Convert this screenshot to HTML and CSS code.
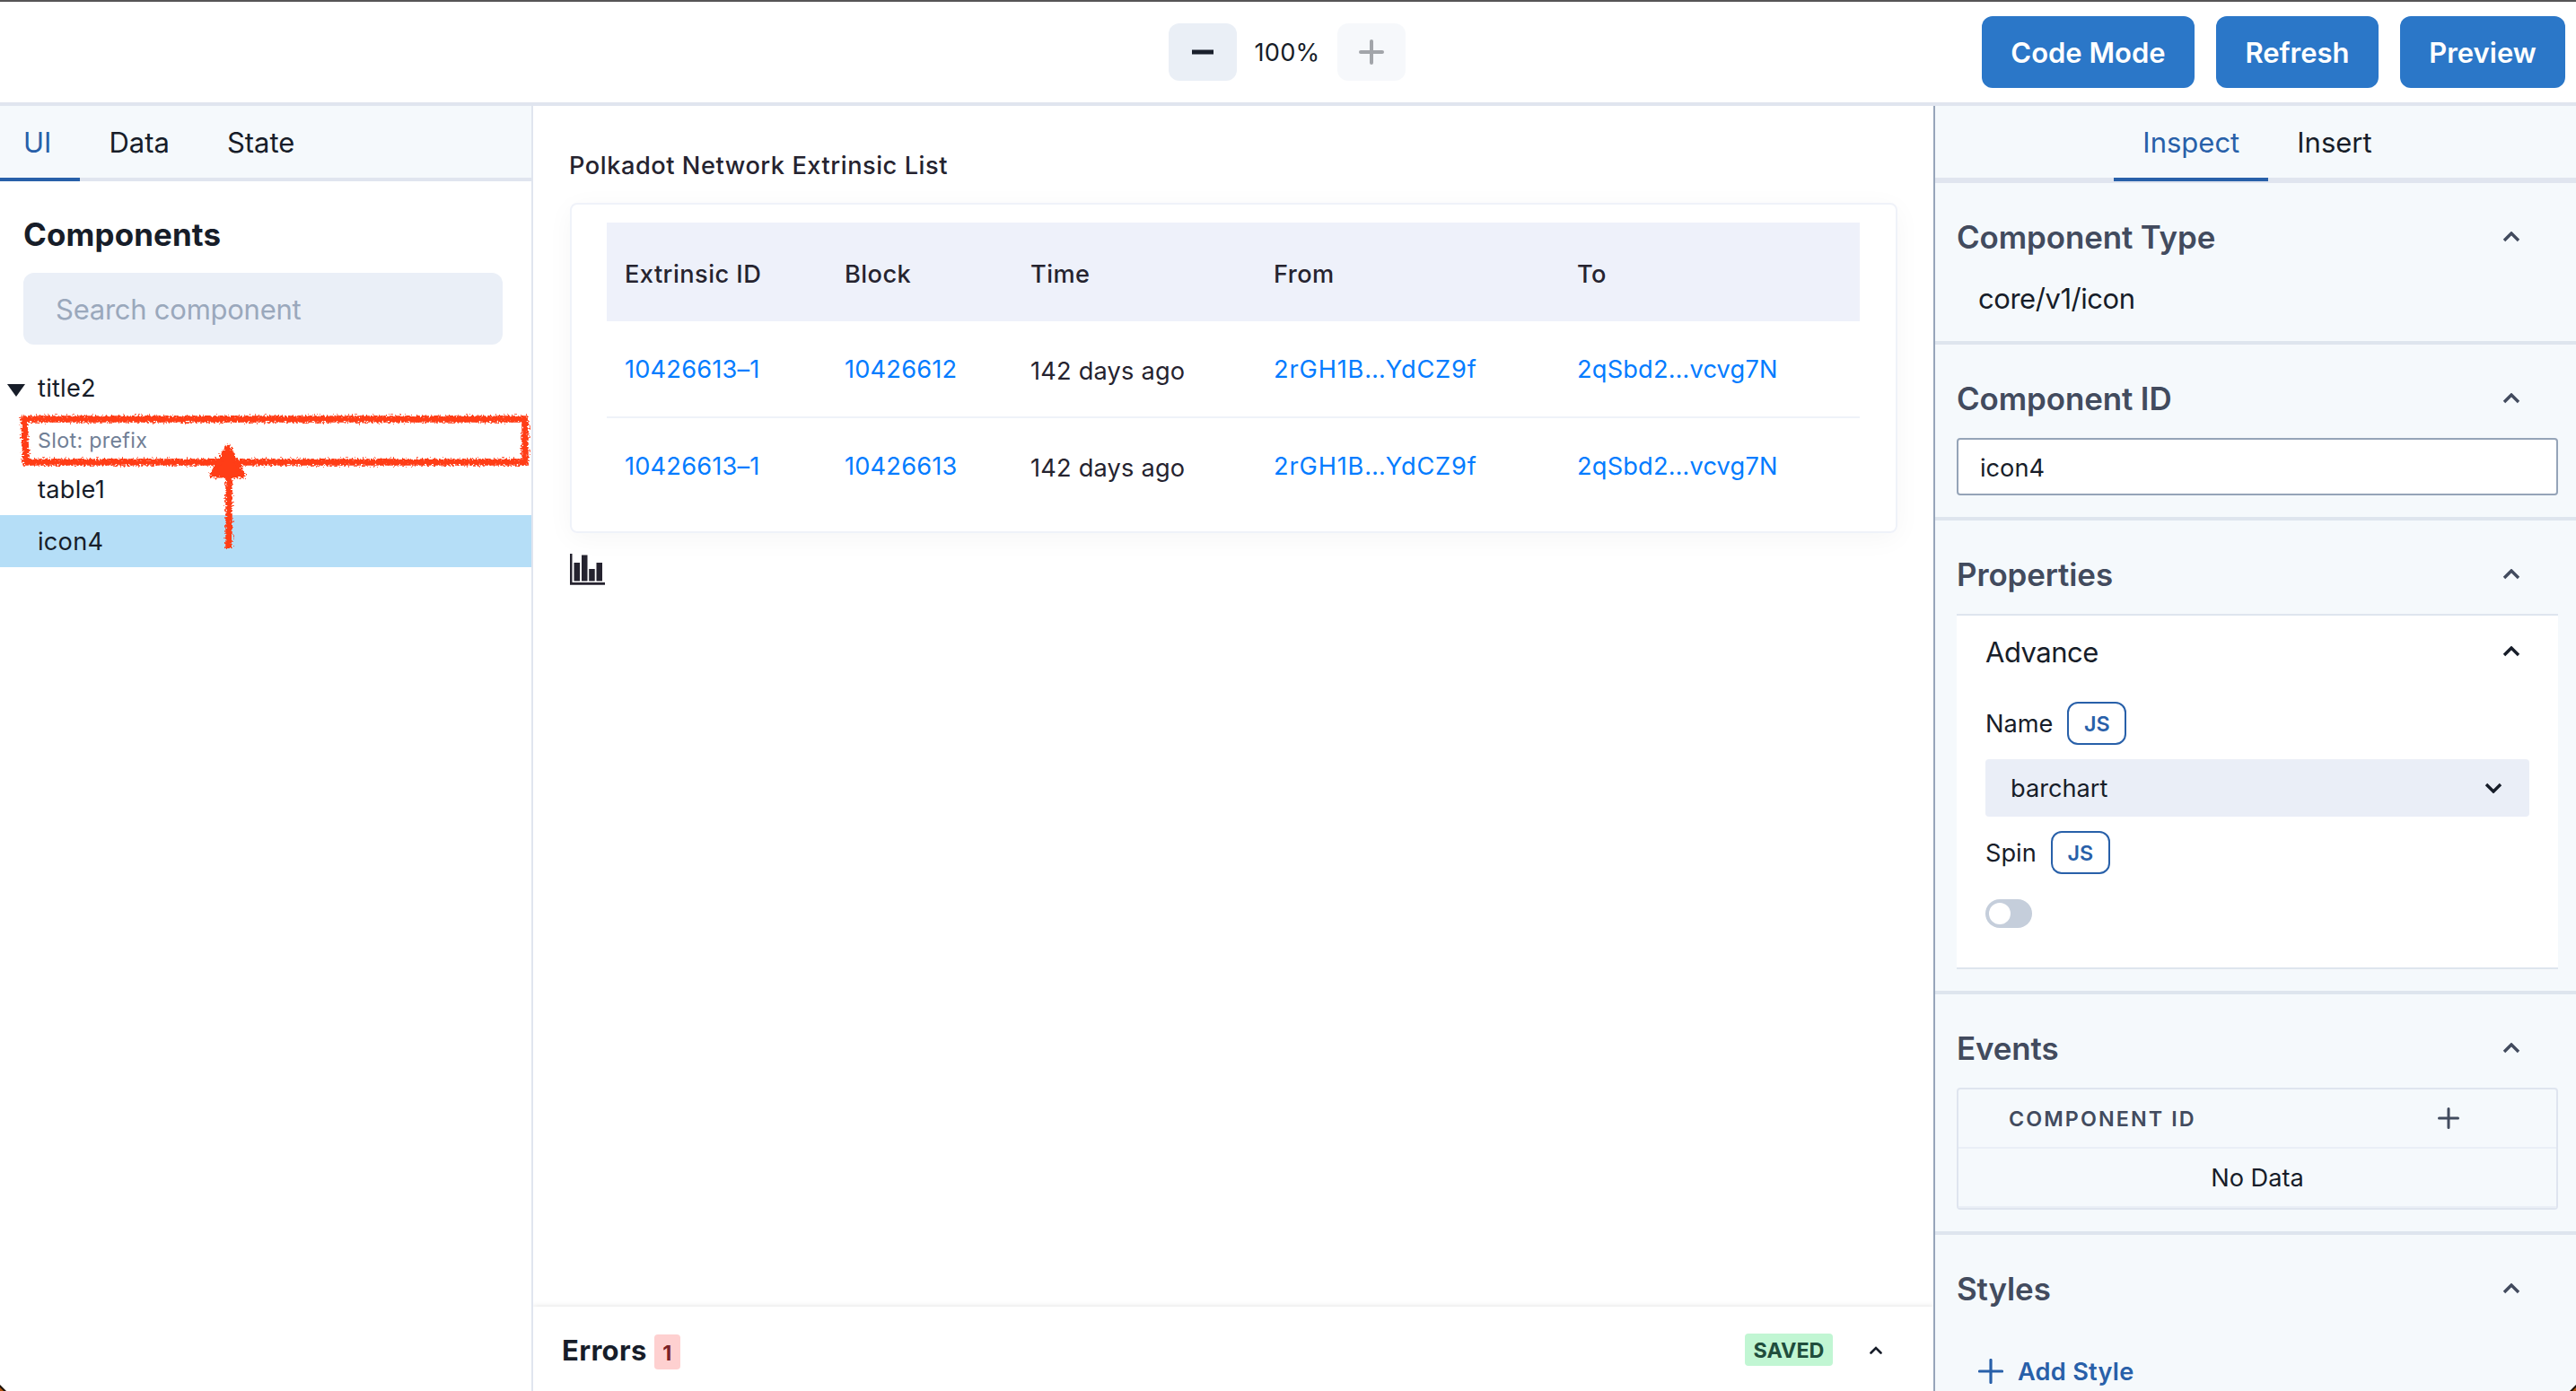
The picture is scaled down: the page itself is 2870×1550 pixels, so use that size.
FILE: index.html
```
<!DOCTYPE html>
<html lang="en">
<head>
  <meta charset="UTF-8">
  <meta name="viewport" content="width=device-width, initial-scale=1.0">
  <title>Editor</title>
  <link rel="stylesheet" href="styles.css">
</head>
<body>
  <div class="editor">
    <header class="header">
      <div></div>
      <div class="zoom">
        <button class="zoom-btn">
          <svg width="24" height="6" viewBox="0 0 24 6"><rect y="0.5" width="24" height="5" fill="#1a202c"/></svg>
        </button>
        <span class="zoom-value">100%</span>
        <button class="zoom-btn disabled">
          <svg width="28" height="28" viewBox="0 0 28 28"><path d="M14 2v24M2 14h24" stroke="#1a202c" stroke-width="4" stroke-linecap="round"/></svg>
        </button>
      </div>
      <div class="header-actions">
        <button class="btn w-code">Code Mode</button>
        <button class="btn w-refresh">Refresh</button>
        <button class="btn w-preview">Preview</button>
      </div>
    </header>

    <div class="body">
      <aside class="left">
        <div class="tabs">
          <div class="tab tab-ui active">UI</div>
          <div class="tab">Data</div>
          <div class="tab">State</div>
        </div>
        <h2 class="left-title">Components</h2>
        <input class="search" placeholder="Search component">
        <div class="tree">
          <div class="node">
            <svg class="caret" width="20" height="14" viewBox="0 0 20 14"><path d="M0 0h20L10 14z" fill="#171d29"/></svg>
            <span>title2</span>
          </div>
          <div class="slot"><span>Slot: prefix</span></div>
          <div class="node"><span>table1</span></div>
          <div class="node selected"><span>icon4</span></div>
        </div>

        <!-- hand drawn marker -->
        <svg class="marker" width="580" height="170" viewBox="0 0 580 170">
          <filter id="chalk" x="-5%" y="-5%" width="110%" height="110%">
            <feTurbulence type="fractalNoise" baseFrequency="0.5" numOctaves="2" seed="4"/>
            <feDisplacementMap in="SourceGraphic" scale="8" xChannelSelector="R" yChannelSelector="G"/>
          </filter>
          <g filter="url(#chalk)" fill="none" stroke="#ff3c17" stroke-width="7.5">
            <path d="M13 12L571 12V60H15Z"/>
            <path d="M241 60V156"/>
            <path d="M240 42L257 75H222Z" fill="#ff3c17" stroke-width="5" stroke-linejoin="round"/>
          </g>
        </svg>
      </aside>

      <main class="main">
        <div class="canvas">
          <h3 class="canvas-title">Polkadot Network Extrinsic List</h3>
          <div class="card">
            <table class="table">
              <thead>
                <tr>
                  <th class="c1">Extrinsic ID</th>
                  <th class="c2">Block</th>
                  <th class="c3">Time</th>
                  <th class="c4">From</th>
                  <th>To</th>
                </tr>
              </thead>
              <tbody>
                <tr>
                  <td><a>10426613–1</a></td>
                  <td><a>10426612</a></td>
                  <td class="time">142 days ago</td>
                  <td><a class="from">2rGH1B…YdCZ9f</a></td>
                  <td><a>2qSbd2…vcvg7N</a></td>
                </tr>
                <tr>
                  <td><a>10426613–1</a></td>
                  <td><a>10426613</a></td>
                  <td class="time">142 days ago</td>
                  <td><a class="from">2rGH1B…YdCZ9f</a></td>
                  <td><a>2qSbd2…vcvg7N</a></td>
                </tr>
              </tbody>
            </table>
          </div>
          <svg class="barchart" width="40" height="36" viewBox="0 0 40 36" fill="#25232f">
            <path d="M0 1h2.5v32H39v2.8H0z"/>
            <rect x="4.5" y="11" width="6.5" height="20.5"/>
            <rect x="13" y="2.5" width="6.5" height="29"/>
            <rect x="21.2" y="18" width="6.5" height="13.5"/>
            <rect x="29.5" y="11" width="6.5" height="20.5"/>
          </svg>
        </div>
        <div class="errors">
          <span class="errors-title">Errors</span>
          <span class="badge badge-red">1</span>
          <span class="badge badge-green">SAVED</span>
          <svg class="errors-chevron" width="14" height="9" viewBox="0 0 14 9"><path d="M1.5 7.5L7 2l5.5 5.5" fill="none" stroke="#171d29" stroke-width="2.6" stroke-linecap="round"/></svg>
        </div>
      </main>

      <aside class="right">
        <div class="tabs tabs-center">
          <div class="tab active">Inspect</div>
          <div class="tab">Insert</div>
        </div>

        <section class="section first">
          <div class="section-head"><h3>Component Type</h3><svg class="chevron" viewBox="0 0 20 12"><path d="M2 10l8-8 8 8"/></svg></div>
          <p class="type">core/v1/icon</p>
        </section>

        <section class="section">
          <div class="section-head"><h3>Component ID</h3><svg class="chevron" viewBox="0 0 20 12"><path d="M2 10l8-8 8 8"/></svg></div>
          <input class="id-input" value="icon4">
        </section>

        <section class="section">
          <div class="section-head"><h3>Properties</h3><svg class="chevron" viewBox="0 0 20 12"><path d="M2 10l8-8 8 8"/></svg></div>
          <div class="props">
            <div class="props-head"><span>Advance</span><svg class="chevron dark" viewBox="0 0 20 12"><path d="M2 10l8-8 8 8"/></svg></div>
            <div class="field"><label>Name</label><button class="js">JS</button></div>
            <div class="select">
              <span>barchart</span>
              <svg class="chevron dark" viewBox="0 0 20 12"><path d="M2 2l8 8 8-8"/></svg>
            </div>
            <div class="field"><label>Spin</label><button class="js">JS</button></div>
            <div class="switch"></div>
          </div>
        </section>

        <section class="section">
          <div class="section-head"><h3>Events</h3><svg class="chevron" viewBox="0 0 20 12"><path d="M2 10l8-8 8 8"/></svg></div>
          <div class="events">
            <div class="events-head">
              <span>COMPONENT ID</span>
              <svg width="24" height="24" viewBox="0 0 24 24"><path d="M12 1.5v21M1.5 12h21" stroke="#424b5e" stroke-width="3" stroke-linecap="round"/></svg>
            </div>
            <div class="events-row"><span>No Data</span></div>
          </div>
        </section>

        <section class="section last">
          <div class="section-head"><h3>Styles</h3><svg class="chevron" viewBox="0 0 20 12"><path d="M2 10l8-8 8 8"/></svg></div>
          <div class="add">
            <svg width="28" height="28" viewBox="0 0 28 28"><path d="M14 1.5v25M1.5 14h25" stroke="#2860a9" stroke-width="3.2" stroke-linecap="round"/></svg>
            <span>Add Style</span>
          </div>
        </section>
      </aside>
    </div>

    <!-- desktop showing behind the window corners -->
    <svg class="corner corner-left" viewBox="0 0 7 7"><path d="M0 0L7 7H0z" fill="#1c1108"/><path d="M0 3L4 7H0z" fill="#b3560f"/></svg>
    <svg class="corner corner-right" viewBox="0 0 7 7"><path d="M7 0L0 7h7z" fill="#1c1108"/><path d="M7 3L3 7h4z" fill="#b3560f"/></svg>
  </div>
</body>
</html>
```
FILE: styles.css
```
* {
  box-sizing: border-box;
}

body {
  margin: 0;
  font-family: Inter, sans-serif;
  color: #171d29;
  background: #fff;
}

h2, h3, p {
  margin: 0;
}

button, input {
  font-family: inherit;
  border: none;
  padding: 0;
}

.editor {
  position: relative;
  width: 2870px;
  height: 1550px;
  display: flex;
  flex-direction: column;
  overflow: hidden;
  border-top: 2px solid #565556;
}

/* header */
.header {
  height: 116px;
  flex: none;
  display: grid;
  grid-template-columns: 1fr auto 1fr;
  align-items: center;
  padding-right: 12px;
  padding-left: 10px;
  border-bottom: 4px solid #e0e5ef;
}

.zoom {
  display: flex;
  align-items: center;
}

.zoom-btn {
  width: 76px;
  height: 64px;
  display: flex;
  align-items: center;
  justify-content: center;
  border-radius: 12px;
  background: #eaeff6;
}

.zoom-btn.disabled {
  opacity: 0.4;
}

.zoom-value {
  width: 112px;
  text-align: center;
  font-size: 27.2px;
  letter-spacing: 0.2px;
}

.header-actions {
  display: flex;
  justify-content: flex-end;
  gap: 24px;
}

.btn {
  height: 80px;
  border-radius: 12px;
  background: #2b77c8;
  color: #fff;
  font-size: 31px;
  font-weight: 600;
}

.w-code {
  width: 237px;
}

.w-refresh {
  width: 181px;
}

.w-preview {
  width: 184px;
}

.body {
  flex: 1;
  min-height: 0;
  display: flex;
}

/* tabs */
.tabs {
  height: 84px;
  display: flex;
  background: #f5f9fc;
  border-bottom: 4px solid #e0e5ef;
}

.tab {
  height: 84px;
  padding: 0 32px;
  font-size: 31px;
  line-height: 82px;
}

.tab.active {
  color: #2860a9;
  border-bottom: 4px solid #2860a9;
}

.tab-ui {
  padding-left: 26px;
}

.tabs-center {
  justify-content: center;
  padding-left: 4px;
}

/* left panel */
.left {
  position: relative;
  width: 594px;
  flex: none;
  border-right: 2px solid #e0e5ef;
}

.left-title {
  margin: 37px 0 21px 26px;
  font-size: 34.9px;
  line-height: 44px;
  font-weight: 700;
  letter-spacing: 0.15px;
}

.search {
  display: block;
  width: 534px;
  height: 80px;
  margin-left: 26px;
  padding: 0 36px;
  border-radius: 12px;
  background: #eaeff7;
  font-size: 31px;
  letter-spacing: -0.25px;
}

.search::placeholder {
  color: #9aa8bc;
}

.tree {
  margin-top: 19px;
}

.node {
  height: 58px;
  display: flex;
  align-items: center;
  padding-left: 42px;
  font-size: 27.2px;
  letter-spacing: 0.25px;
}

.caret {
  margin: 6px 14px 0 -34px;
}

.slot {
  height: 55px;
  padding: 4px 0 0 42px;
  font-size: 23.3px;
  line-height: 51px;
  letter-spacing: 0.3px;
  color: #718096;
}

.selected {
  background: #b5def7;
}

.marker {
  position: absolute;
  left: 14px;
  top: 337px;
}

/* canvas */
.main {
  flex: 1;
  min-width: 0;
  display: flex;
  flex-direction: column;
  color: #25232f;
}

.canvas {
  flex: 1;
  padding: 47px 40px 0 41px;
}

.canvas-title {
  margin-left: -1px;
  font-size: 27.2px;
  line-height: 40px;
  font-weight: 500;
  letter-spacing: 0.55px;
}

.card {
  margin-top: 21px;
  padding: 20px 40px 20px 39px;
  border: 2px solid #eff2f9;
  border-radius: 8px;
  box-shadow: 0 6px 30px rgba(0, 0, 0, 0.04);
}

.table {
  width: 100%;
  table-layout: fixed;
  border-collapse: separate;
  border-spacing: 0;
  font-size: 27.2px;
  letter-spacing: 0.2px;
}

.table th {
  height: 110px;
  padding: 4px 0 0 20px;
  text-align: left;
  font-weight: 500;
  letter-spacing: 0.45px;
  background: #eef1fa;
}

.table td {
  height: 108px;
  padding: 0 0 0 20px;
  border-bottom: 2px solid #eff2f9;
}

.table tr:last-child td {
  height: 106px;
  border-bottom: none;
}

.table td.time {
  padding-top: 4px;
}

.table a {
  color: #047cff;
}

.table .from {
  letter-spacing: 0.85px;
}

.c1 {
  width: 245px;
}

.c2 {
  width: 207px;
}

.c3 {
  width: 271px;
}

.c4 {
  width: 338px;
}

.barchart {
  display: block;
  margin-top: 22px;
}

/* errors bar */
.errors {
  height: 94px;
  display: flex;
  align-items: center;
  padding: 2px 57px 0 32px;
  color: #171d29;
  box-shadow: 0 0 6px rgba(0, 0, 0, 0.14);
  clip-path: inset(-10px 0 0 0);
}

.errors-title {
  font-size: 31px;
  font-weight: 700;
  letter-spacing: 0.35px;
}

.badge {
  border-radius: 4px;
  font-size: 23.3px;
  font-weight: 700;
  text-align: center;
}

.badge-red {
  width: 29px;
  height: 39px;
  line-height: 42px;
  margin: 5px 0 0 8px;
  background: #fed0d0;
  color: #7b2226;
}

.badge-green {
  width: 98px;
  height: 36px;
  line-height: 37px;
  margin-left: auto;
  background: #c1f6d3;
  color: #204d3c;
}

.errors-chevron {
  margin-left: 41px;
}

/* right panel */
.right {
  width: 716px;
  flex: none;
  border-left: 2px solid #97a5ba;
  background: #f5f9fc;
}

.section {
  padding: 40px 20px 24px 24px;
  border-bottom: 4px solid #dee5ee;
}

.section.first {
  border-top: 2px solid #e0e5ef;
}

.section.last {
  border-bottom: none;
}

.section-head {
  height: 40px;
  display: flex;
  align-items: center;
  justify-content: space-between;
  margin-bottom: 24px;
  padding-right: 42px;
}

.section-head h3 {
  font-size: 34.9px;
  line-height: 40px;
  font-weight: 600;
  letter-spacing: -0.1px;
  color: #424b5e;
}

.chevron {
  width: 20px;
  height: 12px;
  fill: none;
  stroke: #424b5e;
  stroke-width: 3.4;
}

.chevron.dark {
  stroke: #171d29;
}

.type {
  padding-left: 24px;
  font-size: 31px;
  line-height: 50px;
  height: 48px;
  letter-spacing: -0.45px;
}

.id-input {
  display: block;
  width: 670px;
  height: 64px;
  padding: 2px 23px 0 24px;
  border: 2px solid #95a4b8;
  border-radius: 4px;
  background: #fff;
  color: #171d29;
  font-size: 27.2px;
}

.props {
  height: 396px;
  padding: 0 32px;
  border: solid #dee5ee;
  border-width: 2px 0;
  background: #fff;
  font-size: 27.2px;
}

.props-head {
  height: 80px;
  display: flex;
  align-items: center;
  justify-content: space-between;
  padding-right: 10px;
  font-size: 31px;
  letter-spacing: -0.5px;
}

.field {
  height: 48px;
  margin: 16px 0;
  display: flex;
  align-items: center;
  gap: 16px;
}

.js {
  width: 66px;
  height: 48px;
  border: 2px solid #2860a9;
  border-radius: 12px;
  background: #fff;
  color: #2860a9;
  font-size: 23.3px;
  font-weight: 600;
}

.select {
  height: 64px;
  display: flex;
  align-items: center;
  justify-content: space-between;
  padding: 0 30px 0 28px;
  border-radius: 4px;
  background: #eaeef7;
}

.switch {
  width: 52px;
  height: 32px;
  margin-top: 28px;
  padding: 4px;
  border-radius: 16px;
  background: #c5cedb;
}

.switch::after {
  content: "";
  display: block;
  width: 24px;
  height: 24px;
  border-radius: 50%;
  background: #fff;
}

.events {
  height: 136px;
  border: 2px solid #dfe5ef;
  border-radius: 4px;
  font-size: 27.2px;
}

.events-head {
  height: 66px;
  display: flex;
  align-items: center;
  justify-content: space-between;
  padding: 0 108px 0 56px;
  border-bottom: 2px solid #eaeff6;
  font-size: 23.3px;
  font-weight: 600;
  letter-spacing: 2.1px;
  color: #424b5e;
}

.events-row {
  height: 66px;
  line-height: 66px;
  text-align: center;
  border-bottom: 2px solid #eaeff6;
}

.add {
  height: 96px;
  display: flex;
  align-items: center;
  gap: 16px;
  padding-left: 24px;
  font-size: 27.2px;
  font-weight: 600;
  letter-spacing: 0.25px;
  color: #2860a9;
}

.corner {
  position: absolute;
  bottom: 0;
  width: 7px;
  height: 7px;
}

.corner-left {
  left: 0;
}

.corner-right {
  right: 0;
}
```
